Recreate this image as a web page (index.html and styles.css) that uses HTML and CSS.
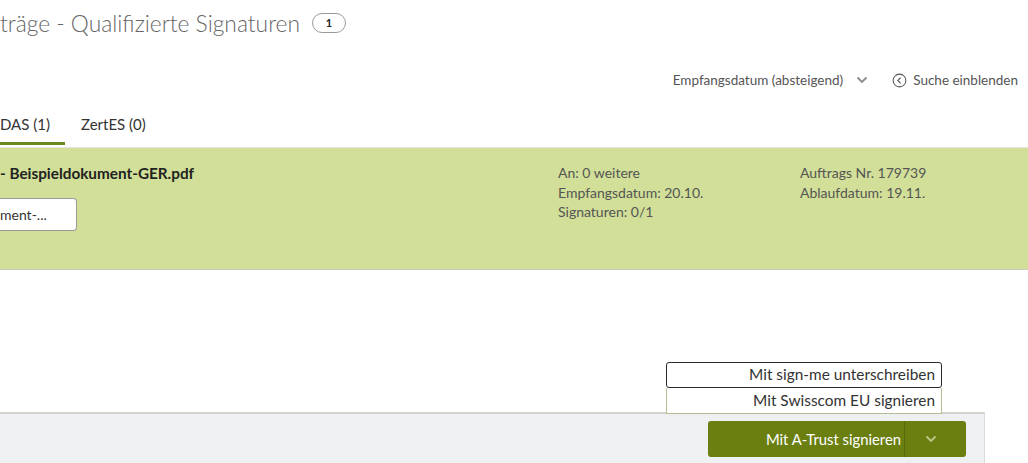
FILE: index.html
```html
<!DOCTYPE html>
<html>
  <head>
    <link rel="stylesheet" href="styles.css">
  </head>
  <body>
    <main class="page">
      <header class="title-row">
        <h1>träge - Qualifizierte Signaturen</h1>
        <span class="badge">1</span>
      </header>
      <div class="toolbar">
        <button class="sort">Empfangsdatum (absteigend)
          <svg width="12" height="8" viewBox="0 0 12 8"><path d="M1.5 1.5 6 6l4.5-4.5" fill="none" stroke="#8a8a8a" stroke-width="1.8"/></svg>
        </button>
        <button class="search-toggle">
          <svg width="15" height="15" viewBox="0 0 16 16"><circle cx="8" cy="8" r="6.8" fill="none" stroke="#555" stroke-width="1.1"/><path d="M9.2 5 6.2 8l3 3" fill="none" stroke="#555" stroke-width="1.2"/></svg>
          Suche einblenden
        </button>
      </div>
      <nav class="tabs">
        <a class="tab active">DAS (1)</a>
        <a class="tab">ZertES (0)</a>
      </nav>
      <section class="card">
        <div class="doc">
          <div class="doc-name">- Beispieldokument-GER.pdf</div>
          <button class="doc-btn">ment-...</button>
        </div>
        <ul class="meta">
          <li>An: 0 weitere</li>
          <li>Empfangsdatum: 20.10.</li>
          <li>Signaturen: 0/1</li>
        </ul>
        <ul class="meta">
          <li>Auftrags Nr. 179739</li>
          <li>Ablaufdatum: 19.11.</li>
        </ul>
      </section>
    </main>
    <footer class="actions">
      <ul class="menu">
        <li class="menu-item focused">Mit sign-me unterschreiben</li>
        <li class="menu-item">Mit Swisscom EU signieren</li>
      </ul>
      <div class="split-btn">
        <button class="split-main">Mit A-Trust signieren</button>
        <button class="split-toggle">
          <svg width="12" height="8" viewBox="0 0 12 8"><path d="M1.5 1.5 6 6l4.5-4.5" fill="none" stroke="#b9c98a" stroke-width="1.8"/></svg>
        </button>
      </div>
    </footer>
  </body>
</html>
```
FILE: styles.css
```css
* {
  margin: 0;
  padding: 0;
  box-sizing: border-box;
}
html {
  height: 100%;
}
body {
  height: 100%;
  display: flex;
  flex-direction: column;
  font-family: Lato, "Open Sans", sans-serif;
  color: #333;
  background: #fff;
  overflow: hidden;
}
button {
  font: inherit;
  background: none;
  border: none;
  color: inherit;
}
.page {
  flex: 1;
}
.title-row {
  display: flex;
  align-items: center;
  gap: 12px;
  height: 46px;
  padding-bottom: 1px;
}
h1 {
  font-size: 22.8px;
  font-weight: 300;
  color: #666;
  line-height: 30px;
}
.badge {
  display: inline-flex;
  align-items: center;
  justify-content: center;
  width: 34px;
  height: 20px;
  border: 1px solid #9a9a9a;
  border-radius: 10px;
  font-size: 11px;
  font-weight: 700;
  color: #222;
}
.toolbar {
  display: flex;
  justify-content: flex-end;
  align-items: center;
  gap: 24px;
  height: 24px;
  margin-top: 22px;
  padding-right: 10px;
  font-size: 13.5px;
  color: #555;
}
.sort, .search-toggle {
  display: flex;
  align-items: center;
  gap: 6px;
}
.sort {
  gap: 13px;
}
.tabs {
  display: flex;
  gap: 16px;
  margin-top: 23px;
  border-bottom: 1px solid #e4e4e4;
  padding-bottom: 2px;
}
.tab {
  display: block;
  font-size: 15px;
  color: #333;
  padding: 0 15px 9px 0;
  border-bottom: 3px solid transparent;
}
.tab.active {
  border-bottom-color: #6b8a1f;
}
.card {
  display: grid;
  grid-template-columns: 558px 242px 1fr;
  height: 122px;
  background: #d1df98;
  border-bottom: 1px solid #c9cbbf;
  padding-top: 15px;
}
.doc-name {
  font-size: 15.3px;
  font-weight: 700;
  color: #222;
  line-height: 20px;
}
.doc-btn {
  display: block;
  margin-top: 15px;
  width: 77px;
  height: 33px;
  background: #fff;
  border: 1px solid #9a9a9a;
  border-left: none;
  border-radius: 0 4px 4px 0;
  text-align: left;
  font-size: 14px;
  color: #333;
}
.meta {
  list-style: none;
  font-size: 14px;
  line-height: 19.5px;
  color: #555;
}
.actions {
  position: relative;
  display: flex;
  justify-content: flex-end;
  height: 51px;
  margin-right: 43px;
  background: #eff0f2;
  border-top: 2px solid #d2d3cd;
  border-right: 1px solid #dcdcdc;
  padding: 7px 18px 0 0;
}
.menu {
  position: absolute;
  right: 42px;
  bottom: 100%;
  width: 276px;
  list-style: none;
  background: #fff;
}
.menu-item {
  height: 26px;
  line-height: 24px;
  text-align: right;
  padding-right: 6px;
  font-size: 15.4px;
  color: #333;
  border: 1px solid #b7bc92;
  border-top: none;
}
.menu-item.focused {
  border: 1.5px solid #2a2a2a;
  border-radius: 3px;
  line-height: 23px;
}
.split-btn {
  display: flex;
  height: 36px;
  background: #6a7f10;
  border-radius: 3px;
}
.split-main {
  width: 197px;
  text-align: right;
  padding-right: 3px;
  font-size: 14.8px;
  color: #fff;
  border-right: 1px solid #586b08;
}
.split-toggle {
  width: 61px;
  display: flex;
  align-items: center;
  justify-content: center;
  padding-right: 10px;
}
```
